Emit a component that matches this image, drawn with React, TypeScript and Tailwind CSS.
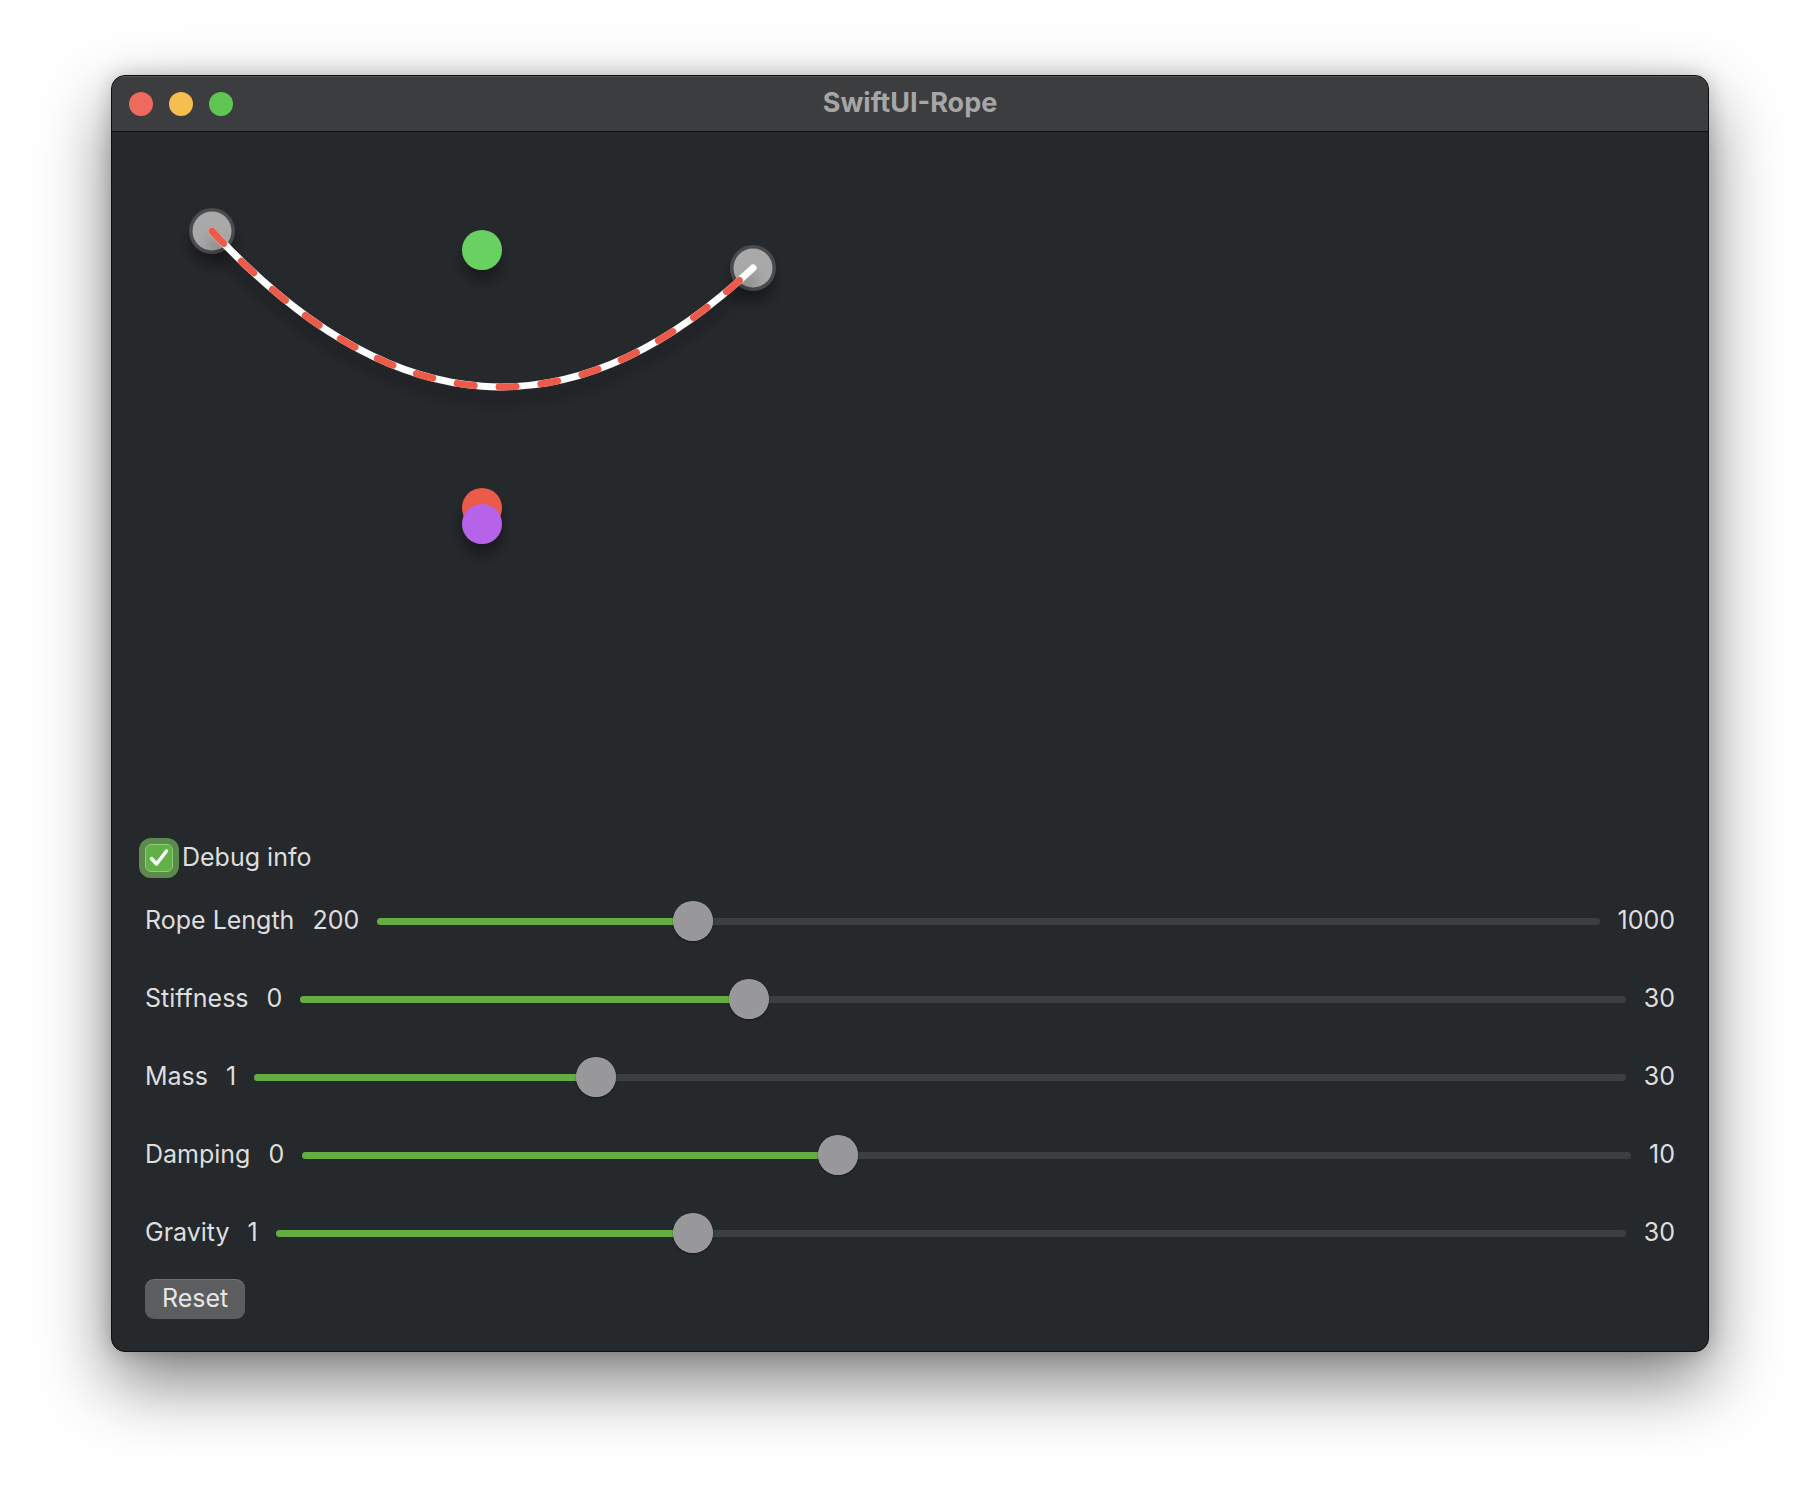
import { ReactNode } from 'react';

type SliderProps = {
  label: string;
  value: number;
  min: number;
  max: number;
  minLabel: string;
  maxLabel: string;
};

function Slider({ label, value, min, max, minLabel, maxLabel }: SliderProps) {
  const f = (value - min) / (max - min);
  return (
    <div className="flex items-center gap-[18px] h-[40px]">
      <span>{label}</span>
      <span>{minLabel}</span>
      <div className="relative flex-1 h-[40px] flex items-center">
        <div className="w-full h-[7px] rounded-full bg-[#3c3f42]" />
        <div
          className="absolute left-0 h-[7px] rounded-full bg-[#64ad42]"
          style={{ width: `calc(20px + (100% - 40px) * ${f})` }}
        />
        <div
          className="absolute top-0 w-[40px] h-[40px] rounded-full bg-[#98989b] shadow-[0_1px_2px_rgba(0,0,0,0.45),inset_0_0_0_0.5px_rgba(255,255,255,0.15)]"
          style={{ left: `calc((100% - 40px) * ${f})` }}
        />
      </div>
      <span>{maxLabel}</span>
    </div>
  );
}

function Dot({ cx, cy, fill }: { cx: number; cy: number; fill: string }) {
  return <circle cx={cx} cy={cy} r={20} fill={fill} filter="url(#drop)" />;
}

function Anchor({ cx, cy }: { cx: number; cy: number }) {
  return (
    <g filter="url(#drop)">
      <circle cx={cx} cy={cy} r={23} fill="#4a4b4d" />
      <circle cx={cx} cy={cy} r={19.5} fill="#a9a9aa" />
    </g>
  );
}

function Canvas() {
  const rope = 'M100 99 Q370.5 391 641 136';
  return (
    <div className="h-[706px]">
      <svg width="1596" height="706" className="block">
        <defs>
          <filter id="drop" x="-50%" y="-50%" width="200%" height="200%">
            <feDropShadow dx="0" dy="12" stdDeviation="7" floodColor="#000" floodOpacity="0.35" />
          </filter>
        </defs>
        <Anchor cx={100} cy={99} />
        <Anchor cx={641} cy={136} />
        <path d={rope} fill="none" stroke="#ffffff" strokeWidth={7} strokeLinecap="round" filter="url(#drop)" />
        <path
          d={rope}
          fill="none"
          stroke="#ec5a49"
          strokeWidth={7}
          strokeLinecap="round"
          strokeDasharray="17 25"
        />
        <Dot cx={370} cy={118} fill="#68d162" />
        <Dot cx={370} cy={376} fill="#ec5a4a" />
        <Dot cx={370} cy={392} fill="#b663ea" />
      </svg>
    </div>
  );
}

function Checkbox({ children }: { children: ReactNode }) {
  return (
    <div className="flex items-center h-[40px] gap-[9px]">
      <div className="w-[28px] h-[28px] rounded-[6px] bg-[#62b048] border border-[#8ccf72] shadow-[0_0_0_6px_#5c8a4d] flex items-center justify-center">
        <svg width="24" height="24" viewBox="0 0 24 24">
          <path d="M4.5 12.5 L9.5 18 L19.5 5" fill="none" stroke="#fff" strokeWidth={3.5} strokeLinecap="round" strokeLinejoin="round" />
        </svg>
      </div>
      <span>{children}</span>
    </div>
  );
}

export default function App() {
  return (
    <div className="min-h-screen bg-white pl-[111px] pt-[75px] font-['Inter','Liberation_Sans',sans-serif]">
      <div className="w-[1598px] rounded-[14px] border border-[#0e0e0f] bg-[#26292c] overflow-hidden shadow-[0_30px_70px_rgba(0,0,0,0.5),0_0_20px_rgba(0,0,0,0.2)]">
        <header className="relative h-[56px] bg-[#3c3d3f] border-b border-[#111213] flex items-center shadow-[inset_0_1px_0_rgba(255,255,255,0.12)]">
          <div className="flex gap-[16px] pl-[17px]">
            <span className="w-[24px] h-[24px] rounded-full bg-[#ee6a5e]" />
            <span className="w-[24px] h-[24px] rounded-full bg-[#f5bf4f]" />
            <span className="w-[24px] h-[24px] rounded-full bg-[#61c554]" />
          </div>
          <h1 className="absolute inset-0 flex items-center justify-center text-[27px] font-bold text-[#a6a6a7] pb-[1px]">
            SwiftUI-Rope
          </h1>
        </header>

        <main className="text-[25px] text-[#dedede]">
          <Canvas />
          <div className="px-[33px] pb-[32px] flex flex-col">
            <Checkbox>Debug info</Checkbox>
            <div className="mt-[23px] flex flex-col gap-[38px]">
              <Slider label="Rope Length" value={400} min={200} max={1000} minLabel="200" maxLabel="1000" />
              <Slider label="Stiffness" value={10} min={0} max={30} minLabel="0" maxLabel="30" />
              <Slider label="Mass" value={8} min={1} max={30} minLabel="1" maxLabel="30" />
              <Slider label="Damping" value={4} min={0} max={10} minLabel="0" maxLabel="10" />
              <Slider label="Gravity" value={9.8} min={1} max={30} minLabel="1" maxLabel="30" />
            </div>
            <button className="mt-[26px] self-start h-[40px] px-[17px] rounded-[9px] bg-[#5c5d5f] text-[#e6e6e6] shadow-[inset_0_1px_0_rgba(255,255,255,0.12)]">
              Reset
            </button>
          </div>
        </main>
      </div>
    </div>
  );
}
